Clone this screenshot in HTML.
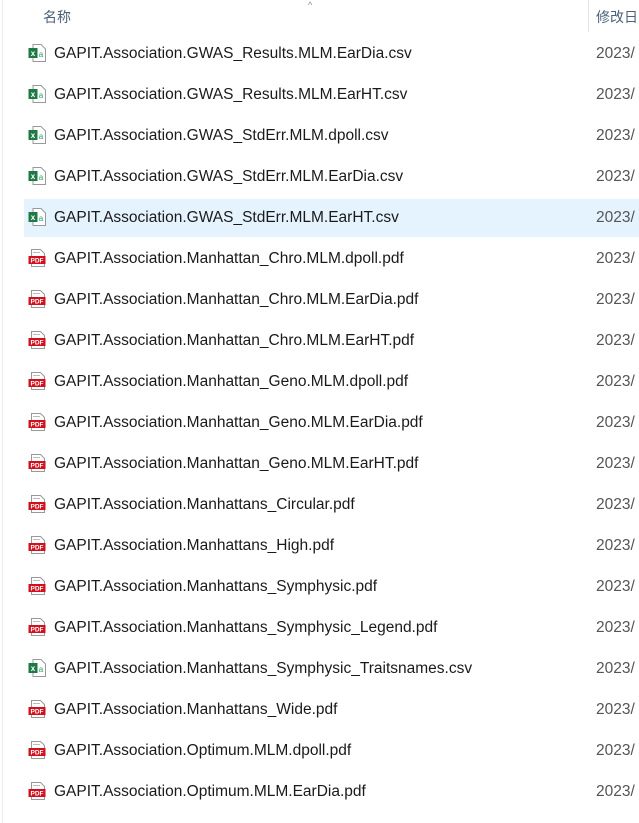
<!DOCTYPE html>
<html><head><meta charset="utf-8"><style>
body{margin:0;width:639px;height:823px;background:#fff;position:relative;overflow:hidden;font-family:"Segoe UI","Liberation Sans","Noto Sans CJK SC",sans-serif}
.hdr{position:absolute;top:7px;font-size:14px;color:#4c607a;font-family:"Noto Sans CJK SC",sans-serif}
.vl{position:absolute;left:2px;top:0;width:1px;height:823px;background:#ececec}
.sep{position:absolute;left:588px;top:0;width:1px;height:32px;background:#e5e5e5}
.row{position:absolute;left:24px;width:615px;height:38px}
.row.sel{background:#e5f3ff}
.ic{position:absolute;left:4px;top:9px;width:18px;height:18px}
.nm{position:absolute;left:30px;top:10px;font-size:15.5px;color:#1a1a1a;white-space:nowrap}
.dt{position:absolute;left:572px;top:10px;font-size:15.5px;color:#555;white-space:nowrap}
</style></head><body>
<div class="vl"></div>
<div class="hdr" style="left:43px">名称</div>
<div style="position:absolute;left:308px;top:0;font-size:9px;color:#888">^</div>
<div class="sep"></div>
<div class="hdr" style="left:596px">修改日</div>
<div id="rows"></div>
<script>
var f=[["x","GAPIT.Association.GWAS_Results.MLM.EarDia.csv"],["x","GAPIT.Association.GWAS_Results.MLM.EarHT.csv"],["x","GAPIT.Association.GWAS_StdErr.MLM.dpoll.csv"],["x","GAPIT.Association.GWAS_StdErr.MLM.EarDia.csv"],["x","GAPIT.Association.GWAS_StdErr.MLM.EarHT.csv"],["p","GAPIT.Association.Manhattan_Chro.MLM.dpoll.pdf"],["p","GAPIT.Association.Manhattan_Chro.MLM.EarDia.pdf"],["p","GAPIT.Association.Manhattan_Chro.MLM.EarHT.pdf"],["p","GAPIT.Association.Manhattan_Geno.MLM.dpoll.pdf"],["p","GAPIT.Association.Manhattan_Geno.MLM.EarDia.pdf"],["p","GAPIT.Association.Manhattan_Geno.MLM.EarHT.pdf"],["p","GAPIT.Association.Manhattans_Circular.pdf"],["p","GAPIT.Association.Manhattans_High.pdf"],["p","GAPIT.Association.Manhattans_Symphysic.pdf"],["p","GAPIT.Association.Manhattans_Symphysic_Legend.pdf"],["x","GAPIT.Association.Manhattans_Symphysic_Traitsnames.csv"],["p","GAPIT.Association.Manhattans_Wide.pdf"],["p","GAPIT.Association.Optimum.MLM.dpoll.pdf"],["p","GAPIT.Association.Optimum.MLM.EarDia.pdf"]];
var xs='<svg class="ic" viewBox="0 0 18 18"><path d="M5 0.5h8l4.5 4.5v12.5h-12.5z" fill="#fff" stroke="#999"/><rect x="0.5" y="4" width="9" height="10" fill="#1e7a45"/><text x="5" y="12" font-size="8" font-weight="bold" fill="#fff" text-anchor="middle" font-family="Liberation Sans">x</text><text x="13" y="13" font-size="8" fill="#21a366" text-anchor="middle" font-family="Liberation Sans">a</text></svg>';
var ps='<svg class="ic" viewBox="0 0 18 18"><path d="M3.5 0.5h9l4 4v13h-13z" fill="#fff" stroke="#999"/><line x1="5" y1="3.5" x2="12" y2="3.5" stroke="#bbb"/><rect x="0.5" y="7" width="17" height="8" fill="#d0101c"/><text x="9" y="13.5" font-size="6.5" font-weight="bold" fill="#fff" text-anchor="middle" font-family="Liberation Sans">PDF</text></svg>';
var h='';
for(var i=0;i<f.length;i++){var y=35+41*i;h+='<div class="row'+(i==4?' sel':'')+'" style="top:'+y+'px">'+(f[i][0]=='x'?xs:ps)+'<div class="nm">'+f[i][1]+'</div><div class="dt">2023/</div></div>';}
document.getElementById('rows').innerHTML=h;
</script>
</body></html>
